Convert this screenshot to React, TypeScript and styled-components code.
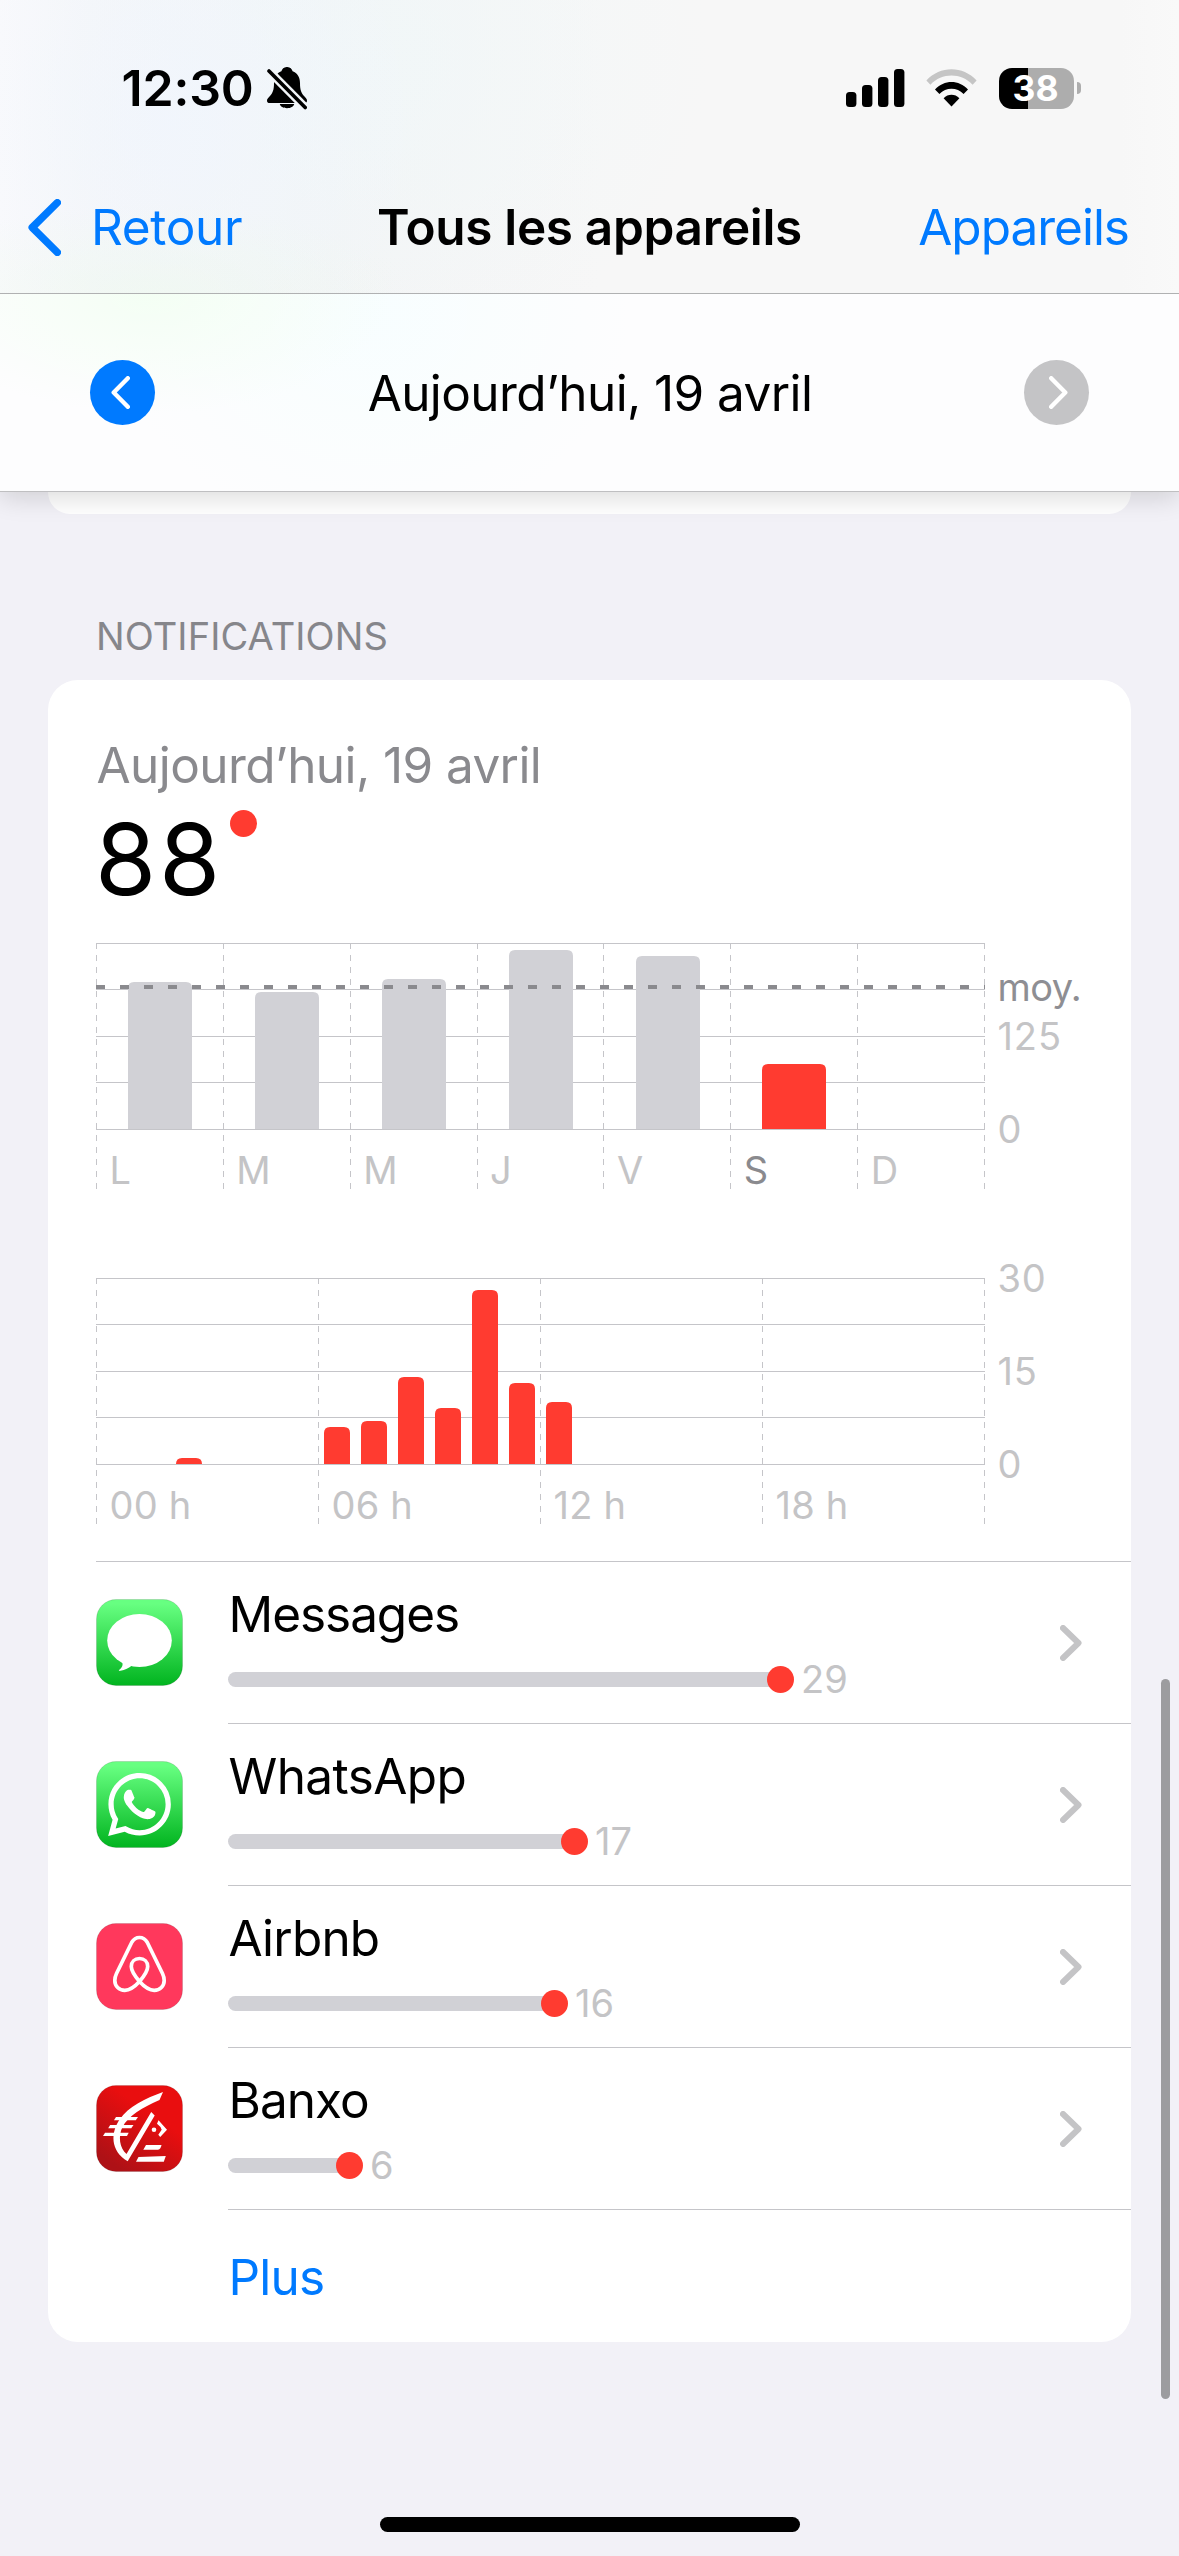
import React from "react";
import styled, { createGlobalStyle } from "styled-components";
import { SiWhatsapp } from "react-icons/si";

const BLUE = "#007aff";
const RED = "#ff3b30";
const LINE = "#c5c5c9";
const BAR = "#d1d1d6";
const FAINT = "#c4c4c6";
const MUTED = "#8a8a8e";

const GlobalStyle = createGlobalStyle`
  * { box-sizing: border-box; }
  body { margin: 0; background: #f2f1f7; }
`;

const Page = styled.div`
  position: relative;
  display: flex;
  flex-direction: column;
  width: 1179px;
  height: 2556px;
  overflow: hidden;
  background: #f2f1f7;
  color: #000;
  font-family: Inter, "Liberation Sans", sans-serif;
  white-space: nowrap;
`;

/* ---------- header ---------- */

const Header = styled.header`
  position: relative;
  z-index: 1;
  flex: none;
  box-shadow: 0 6px 24px rgba(0, 0, 0, 0.14);
`;

const TopBars = styled.div`
  height: 294px;
  border-bottom: 1px solid #b0b1b2;
  background:
    radial-gradient(ellipse 260px 90px at 150px 294px, rgba(238, 249, 238, 0.6), rgba(238, 249, 238, 0)),
    radial-gradient(ellipse 260px 280px at 170px 120px, rgba(240, 245, 254, 0.7), rgba(240, 245, 254, 0)),
    radial-gradient(ellipse 340px 300px at 370px 60px, rgba(240, 248, 249, 0.7), rgba(240, 248, 249, 0)),
    linear-gradient(90deg, #fafafc 0, #f6f7f8 90px, #f3f4f5 330px, #f7f7f7 600px, #f7f7f7 1120px, #f9f9f9 100%);
`;

const StatusBar = styled.div`
  display: flex;
  align-items: center;
  justify-content: space-between;
  height: 176px;
  padding: 0 98px 0 121.5px;
`;

const StatusGroup = styled.div<{ $gap: number }>`
  display: flex;
  align-items: center;
  gap: ${(p) => p.$gap}px;
`;

const Clock = styled.span`
  font-size: 50px;
  font-weight: 600;
  line-height: 60px;
  letter-spacing: -0.2px;
`;

const Battery = styled.div`
  display: flex;
  align-items: center;
  gap: 3px;
  margin-left: 1px;
`;

const BatteryBody = styled.div<{ $level: number }>`
  display: flex;
  align-items: center;
  justify-content: center;
  width: 75px;
  height: 41px;
  border-radius: 13px;
  background: linear-gradient(90deg, #000 ${(p) => p.$level}%, #adadad ${(p) => p.$level}%);
  color: #fff;
  font-size: 35.5px;
  font-weight: 700;
  line-height: 41px;
  padding-right: 2px;
`;

const BatteryCap = styled.div`
  width: 4px;
  height: 12px;
  border-radius: 0 6px 6px 0;
  background: #adadad;
`;

const NavBar = styled.nav`
  display: grid;
  grid-template-columns: 1fr auto 1fr;
  align-items: center;
  height: 102px;
  padding: 0 50px;
`;

const NavLink = styled.a<{ $end?: boolean }>`
  display: flex;
  align-items: center;
  gap: 30px;
  justify-self: ${(p) => (p.$end ? "end" : "start")};
  margin-left: ${(p) => (p.$end ? 0 : -22)}px;
  color: ${BLUE};
  font-size: 49.5px;
  line-height: 60px;
  letter-spacing: ${(p) => (p.$end ? -1 : -0.33)}px;
`;

const NavTitle = styled.h1`
  margin: 0;
  font-size: 49.5px;
  font-weight: 600;
  line-height: 60px;
  letter-spacing: -0.33px;
`;

const DateBar = styled.div`
  display: flex;
  align-items: center;
  justify-content: space-between;
  height: 198px;
  padding: 0 90px;
  border-bottom: 1px solid #bfbfc1;
  background:
    radial-gradient(ellipse 240px 120px at 150px 0, rgba(243, 255, 243, 0.9), rgba(243, 255, 243, 0)),
    radial-gradient(ellipse 260px 220px at 370px 20px, rgba(246, 254, 255, 0.8), rgba(246, 254, 255, 0)),
    #fdfdfe;
`;

const DateTitle = styled.span`
  padding-left: 1px;
  font-size: 49.5px;
  line-height: 60px;
  letter-spacing: -0.59px;
`;

const RoundButton = styled.button<{ $disabled?: boolean }>`
  display: flex;
  align-items: center;
  justify-content: center;
  width: 65px;
  height: 65px;
  padding: ${(p) => (p.$disabled ? "0 0 0 3px" : "0 4px 0 0")};
  border: 0;
  border-radius: 50%;
  background: ${(p) => (p.$disabled ? "#c4c4c6" : BLUE)};
`;

/* ---------- content ---------- */

const Content = styled.main`
  flex: 1;
  padding: 0 48px;
`;

const PreviousCard = styled.div`
  height: 22px;
  border-radius: 0 0 30px 30px;
  background: #fff;
`;

const SectionTitle = styled.h2`
  margin: 98px 0 20px;
  padding-left: 48px;
  color: #86868b;
  font-size: 38px;
  font-weight: 400;
  line-height: 48px;
  letter-spacing: 0.09px;
`;

const Card = styled.section`
  display: flex;
  flex-direction: column;
  height: 1662px;
  border-radius: 30px;
  background: #fff;
`;

const Summary = styled.div`
  height: 263px;
  padding: 55px 0 0 48px;
`;

const SummaryDate = styled.div`
  padding-left: 0.5px;
  color: ${MUTED};
  font-size: 49.5px;
  line-height: 60px;
  letter-spacing: -0.59px;
`;

const Total = styled.div`
  display: flex;
  align-items: flex-start;
  gap: 7px;
  padding-top: 15px;
`;

const TotalValue = styled.span`
  margin-left: -1px;
  font-size: 99px;
  line-height: 98px;
  letter-spacing: 2.75px;
`;

const Dot = styled.i`
  flex: none;
  width: 27px;
  height: 27px;
  border-radius: 50%;
  background: ${RED};
`;

const ChartRow = styled.div<{ $after: number }>`
  display: grid;
  grid-template-columns: 889px auto;
  column-gap: 12.5px;
  height: 247px;
  margin: 0 0 ${(p) => p.$after}px 48px;
`;

const Plot = styled.div`
  display: flex;
  flex-direction: column;
`;

const PlotSvg = styled.svg`
  display: block;
  flex: none;
  width: 889px;
  height: 247px;
`;

const XLabels = styled.div<{ $count: number }>`
  display: grid;
  grid-template-columns: repeat(${(p) => p.$count}, 1fr);
  width: 888px;
  height: 48px;
  margin-top: -44px;
`;

const XLabel = styled.span<{ $active?: boolean }>`
  padding-left: 13.5px;
  color: ${(p) => (p.$active ? MUTED : FAINT)};
  font-size: 38px;
  line-height: 48px;
  letter-spacing: 0.19px;
`;

const YLabels = styled.div<{ $top: number }>`
  display: flex;
  flex-direction: column;
  margin-top: ${(p) => p.$top}px;
`;

const YLabel = styled.span<{ $height: number; $strong?: boolean }>`
  flex: none;
  height: ${(p) => p.$height}px;
  color: ${(p) => (p.$strong ? "#8e8e93" : FAINT)};
  font-size: 38px;
  line-height: 48px;
  letter-spacing: ${(p) => (p.$strong ? -0.6 : 0.9)}px;
`;

const AppList = styled.div`
  margin-left: 48px;
  border-top: 1px solid ${LINE};
`;

const AppRow = styled.div`
  display: flex;
  align-items: flex-start;
  height: 162px;
`;

const AppIcon = styled.svg`
  flex: none;
  width: 87px;
  height: 87px;
  margin: 37px 45px 0 0;
`;

const AppBody = styled.div`
  display: flex;
  flex: 1;
  align-items: center;
  justify-content: space-between;
  height: 162px;
  padding-right: 49px;
  border-bottom: 1px solid ${LINE};
`;

const AppInfo = styled.div`
  display: flex;
  flex-direction: column;
  height: 161px;
  padding-top: 22px;
`;

const AppName = styled.span<{ $tracking: number }>`
  padding-left: 0.5px;
  font-size: 49.5px;
  line-height: 60px;
  letter-spacing: ${(p) => p.$tracking}px;
`;

const Usage = styled.div`
  display: flex;
  align-items: center;
  height: 48px;
  margin-top: 11px;
`;

const UsageBar = styled.div`
  height: 15px;
  margin-right: -3px;
  border-radius: 8px 0 0 8px;
  background: ${BAR};
`;

const UsageValue = styled.span`
  margin-left: 7px;
  color: ${FAINT};
  font-size: 38px;
  line-height: 48px;
`;

const MoreLink = styled.a`
  padding: 37px 0 0 180.5px;
  color: ${BLUE};
  font-size: 49.5px;
  line-height: 60px;
  letter-spacing: -0.8px;
`;

/* ---------- overlays ---------- */

const ScrollThumb = styled.div`
  position: absolute;
  top: 1679px;
  right: 9px;
  width: 9px;
  height: 720px;
  border-radius: 5px;
  background: #9c9c9f;
`;

const HomeIndicator = styled.div`
  position: absolute;
  bottom: 24px;
  left: 380px;
  width: 420px;
  height: 15px;
  border-radius: 8px;
  background: #000;
`;

/* ---------- icons ---------- */

function MutedBell() {
  return (
    <svg width="40" height="43" viewBox="0 0 40 43">
      <path
        d="M20 0.5c-2.9 0-5 1.9-5.6 4.4C9.500 6.800 7 11 7 17c0 7-1.200 10.500-4.500 14C.8 32.800 0 33.700 0 35.200 0 36.700 1 37.600 2.800 37.600h34.400c1.800 0 2.800-.9 2.800-2.400 0-1.500-.8-2.400-2.500-4.200C34.200 27.500 33 24 33 17c0-6-2.500-10.200-7.400-12.100C25 2.400 22.900.5 20 .5z M12.800 38.700h14.400c-.6 2.700-3.400 4.300-7.200 4.300s-6.600-1.600-7.200-4.300z"
        transform="translate(0 -0.500) scale(1 .97)"
      />
      <path d="M2 4L38.200 40.500" stroke="#f2f5f8" strokeWidth="8.500" />
      <path d="M2 4L38.200 40.500" stroke="#000" strokeWidth="3.600" strokeLinecap="round" />
    </svg>
  );
}

function Signal() {
  return (
    <svg width="59" height="38" viewBox="0 0 59 38">
      {[15, 22, 30, 38].map((h, i) => (
        <rect key={h} x={i * 16} y={38 - h} width="10.400" height={h} rx="3.500" />
      ))}
    </svg>
  );
}

function Wifi() {
  return (
    <svg width="51" height="38" viewBox="0 0 51 38">
      <path d="M0.400 11.500C14-3.500 37-3.500 50.600 11.500L46.600 15.700C35 3.500 16 3.500 4.400 15.700z" fill="#c5c5c5" />
      <path d="M9 20.600C18 10.600 33 10.600 42 20.600L37.600 25.100C31 18 20 18 13.400 25.100z" />
      <path d="M17.600 29.300C22 24.700 29 24.700 33.400 29.300L25.500 37.600z" />
    </svg>
  );
}

interface ChevronProps {
  width: number;
  height: number;
  stroke: number;
  color: string;
  left?: boolean;
}

function Chevron({ width, height, stroke, color, left }: ChevronProps) {
  const s = stroke / 2;
  const near = left ? width - s : s;
  const tip = left ? s + 0.5 : width - s - 0.5;
  return (
    <svg width={width} height={height} viewBox={`0 0 ${width} ${height}`}>
      <path
        d={`M${near} ${s}L${tip} ${height / 2}L${near} ${height - s}`}
        fill="none"
        stroke={color}
        strokeWidth={stroke}
        strokeLinecap="round"
        strokeLinejoin="round"
      />
    </svg>
  );
}

function GreenTile({ id }: { id: string }) {
  return (
    <>
      <linearGradient id={id} x1="0" y1="0" x2="0" y2="1">
        <stop offset="0.050" stopColor="#67ff81" />
        <stop offset="1" stopColor="#01b41f" />
      </linearGradient>
      <rect x="0.500" y="0.500" width="86" height="86" rx="19.500" fill={`url(#${id})`} stroke="#000" strokeOpacity="0.120" />
    </>
  );
}

function MessagesIcon() {
  return (
    <AppIcon viewBox="0 0 87 87">
      <GreenTile id="messages" />
      <ellipse cx="43.500" cy="41.500" rx="32.300" ry="26.600" fill="#fff" />
      <path d="M26 62.500C27.500 66 26 69 23 71C22.600 71.900 23.200 72 24.500 71.800C29 71 33 69 36 66.500z" fill="#fff" />
    </AppIcon>
  );
}

function WhatsAppIcon() {
  return (
    <AppIcon viewBox="0 0 87 87">
      <GreenTile id="whatsapp" />
      <SiWhatsapp x="12" y="12" size={63} color="#fff" />
    </AppIcon>
  );
}

function AirbnbIcon() {
  return (
    <AppIcon viewBox="0 0 87 87">
      <rect x="0.500" y="0.500" width="86" height="86" rx="19.500" fill="#ff385c" stroke="#000" strokeOpacity="0.120" />
      <path
        d="M43.500 58.500C37.500 51.500 35.300 47.500 35.300 43.500C35.300 38.800 38.700 35.500 43.500 35.500C48.300 35.500 51.700 38.800 51.700 43.500C51.700 47.500 49.500 51.500 43.500 58.500C38.500 64 34.500 67.300 28.800 67.300C23 67.300 18.800 63 18.800 57.500C18.800 55 19.300 53 20.500 50.500L35.800 19.200C37.800 15.800 40 14.500 43.500 14.500C47 14.500 49.200 15.800 51.200 19.200L66.500 50.500C67.700 53 68.200 55 68.200 57.500C68.200 63 64 67.300 58.200 67.300C52.500 67.300 48.500 64 43.500 58.500z"
        fill="none"
        stroke="#fff"
        strokeWidth="3.700"
        strokeLinejoin="round"
      />
    </AppIcon>
  );
}

function BanxoIcon() {
  return (
    <AppIcon viewBox="0 0 87 87">
      <linearGradient id="banxo" x1="0" y1="1" x2="0.700" y2="0">
        <stop offset="0.150" stopColor="#ae1116" />
        <stop offset="0.750" stopColor="#e90e0f" />
      </linearGradient>
      <rect x="0.500" y="0.500" width="86" height="86" rx="19.500" fill="url(#banxo)" stroke="#000" strokeOpacity="0.120" />
      <g fill="#fff">
        <path d="M67 7C50 13 32 22 24 34C14.500 47 14 66 31.700 76.300L58.700 30.500L55.200 27L30.500 69C23.500 63 22 51 26.500 42C32 31 47 22 63.500 15z" />
        <path d="M20 32H42L39.800 35.200H18z" />
        <path d="M14.200 40H37.500L35.300 43.200H12.200z" />
        <path d="M9 47.700H32.700L31 51H7z" />
        <circle cx="58" cy="44.800" r="2.300" />
        <path d="M62.500 35.200L71 44.800L64.200 52L62.300 49.800L65.700 44.800L64.500 42L61 38.800z" />
        <path d="M50 60H65.500C65 62.500 64 64.500 62 64.700H47.300z" />
        <path d="M42.500 72L69.800 71L67.800 76.700H40z" />
      </g>
    </AppIcon>
  );
}

/* ---------- charts ---------- */

const PLOT_W = 888;
const PLOT_H = 186;

interface ChartBar {
  x: number;
  width: number;
  value: number;
  color: string;
}

interface PlotGridProps {
  lines: number[];
  bars: ChartBar[];
  max: number;
  average?: number;
}

function barPath(x: number, w: number, h: number) {
  const r = Math.min(6, h);
  const top = PLOT_H - h;
  return `M${x} ${PLOT_H}V${top + r}Q${x} ${top} ${x + r} ${top}H${x + w - r}Q${x + w} ${top} ${x + w} ${top + r}V${PLOT_H}z`;
}

function PlotGrid({ lines, bars, max, average }: PlotGridProps) {
  return (
    <PlotSvg viewBox="0 0 889 247">
      {[0, 46, 93, 139].map((y) => (
        <rect key={y} x="0" y={y} width={PLOT_W + 1} height="1" fill={LINE} />
      ))}
      {lines.map((x) => (
        <line key={x} x1={x + 0.5} x2={x + 0.5} y1="0" y2="246" stroke={LINE} strokeDasharray="6 6" />
      ))}
      {bars.map((b) => (
        <path key={b.x} d={barPath(b.x, b.width, Math.round((b.value / max) * PLOT_H))} fill={b.color} />
      ))}
      <rect x="0" y={PLOT_H} width={PLOT_W + 1} height="1" fill={LINE} />
      {average !== undefined && (
        <line
          x1="0"
          x2={PLOT_W + 1}
          y1={PLOT_H - average}
          y2={PLOT_H - average}
          stroke={MUTED}
          strokeWidth="4"
          strokeDasharray="9 15"
        />
      )}
    </PlotSvg>
  );
}

const week = [
  { day: "L", value: 197, x: 32 },
  { day: "M", value: 184, x: 159 },
  { day: "M", value: 202, x: 286 },
  { day: "J", value: 241, x: 413 },
  { day: "V", value: 233, x: 540 },
  { day: "S", value: 88, x: 666 },
  { day: "D", value: 0, x: 793 },
];

const hours = [
  { hour: 2, value: 1 },
  { hour: 6, value: 6 },
  { hour: 7, value: 7 },
  { hour: 8, value: 14 },
  { hour: 9, value: 9 },
  { hour: 10, value: 28 },
  { hour: 11, value: 13 },
  { hour: 12, value: 10 },
];

const apps = [
  { name: "Messages", count: 29, width: 542, tracking: -1.05, icon: <MessagesIcon /> },
  { name: "WhatsApp", count: 17, width: 336, tracking: -0.6, icon: <WhatsAppIcon /> },
  { name: "Airbnb", count: 16, width: 316, tracking: -0.8, icon: <AirbnbIcon /> },
  { name: "Banxo", count: 6, width: 111, tracking: -0.95, icon: <BanxoIcon /> },
];

export default function App() {
  return (
    <Page>
      <GlobalStyle />
      <Header>
        <TopBars>
          <StatusBar>
            <StatusGroup $gap={13}>
              <Clock>12:30</Clock>
              <MutedBell />
            </StatusGroup>
            <StatusGroup $gap={21}>
              <Signal />
              <Wifi />
              <Battery>
                <BatteryBody $level={39}>38</BatteryBody>
                <BatteryCap />
              </Battery>
            </StatusGroup>
          </StatusBar>
          <NavBar>
            <NavLink>
              <Chevron width={33} height={57} stroke={7.4} color={BLUE} left />
              Retour
            </NavLink>
            <NavTitle>Tous les appareils</NavTitle>
            <NavLink $end>Appareils</NavLink>
          </NavBar>
        </TopBars>
        <DateBar>
          <RoundButton>
            <Chevron width={19} height={33} stroke={4.4} color="#fff" left />
          </RoundButton>
          <DateTitle>Aujourd’hui, 19 avril</DateTitle>
          <RoundButton $disabled>
            <Chevron width={19} height={33} stroke={4.4} color="#fff" />
          </RoundButton>
        </DateBar>
      </Header>

      <Content>
        <PreviousCard />
        <SectionTitle>NOTIFICATIONS</SectionTitle>
        <Card>
          <Summary>
            <SummaryDate>Aujourd’hui, 19 avril</SummaryDate>
            <Total>
              <TotalValue>88</TotalValue>
              <Dot />
            </Total>
          </Summary>

          <ChartRow $after={88}>
            <Plot>
              <PlotGrid
                lines={[0, 127, 254, 381, 507, 634, 761, 888]}
                bars={week
                  .filter((d) => d.value > 0)
                  .map((d) => ({ x: d.x, width: 64, value: d.value, color: d.day === "S" ? RED : BAR }))}
                max={250}
                average={142}
              />
              <XLabels $count={7}>
                {week.map((d) => (
                  <XLabel key={d.x} $active={d.day === "S"}>
                    {d.day}
                  </XLabel>
                ))}
              </XLabels>
            </Plot>
            <YLabels $top={20}>
              <YLabel $height={49} $strong>
                moy.
              </YLabel>
              <YLabel $height={93}>125</YLabel>
              <YLabel $height={48}>0</YLabel>
            </YLabels>
          </ChartRow>

          <ChartRow $after={36}>
            <Plot>
              <PlotGrid
                lines={[0, 222, 444, 666, 888]}
                bars={hours.map((h) => ({ x: h.hour * 37 + 6, width: 26, value: h.value, color: RED }))}
                max={30}
              />
              <XLabels $count={4}>
                {["00 h", "06 h", "12 h", "18 h"].map((label) => (
                  <XLabel key={label}>{label}</XLabel>
                ))}
              </XLabels>
            </Plot>
            <YLabels $top={-24}>
              <YLabel $height={93}>30</YLabel>
              <YLabel $height={93}>15</YLabel>
              <YLabel $height={48}>0</YLabel>
            </YLabels>
          </ChartRow>

          <AppList>
            {apps.map((app) => (
              <AppRow key={app.name}>
                {app.icon}
                <AppBody>
                  <AppInfo>
                    <AppName $tracking={app.tracking}>{app.name}</AppName>
                    <Usage>
                      <UsageBar style={{ width: app.width }} />
                      <Dot />
                      <UsageValue>{app.count}</UsageValue>
                    </Usage>
                  </AppInfo>
                  <Chevron width={22} height={36} stroke={6} color={FAINT} />
                </AppBody>
              </AppRow>
            ))}
          </AppList>
          <MoreLink>Plus</MoreLink>
        </Card>
      </Content>

      <ScrollThumb />
      <HomeIndicator />
    </Page>
  );
}
